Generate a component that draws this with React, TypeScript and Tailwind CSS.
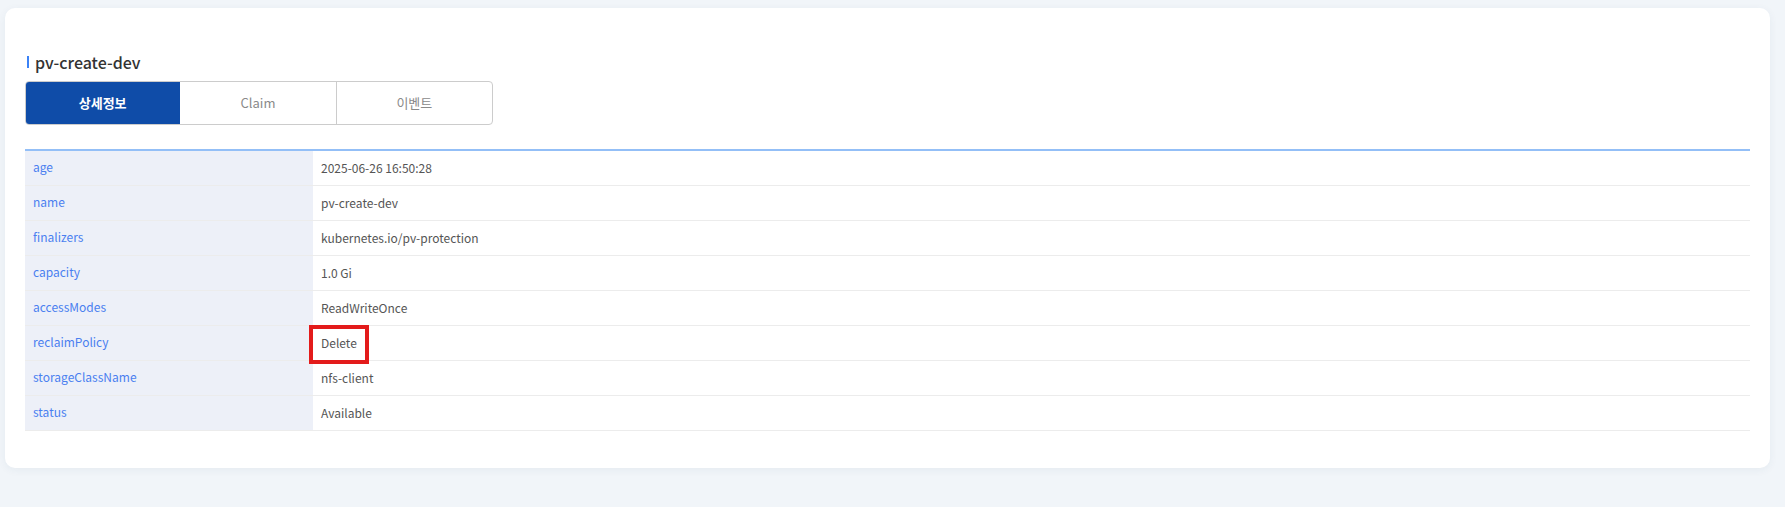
import React from "react";

const rows: [string, string][] = [
  ["age", "2025-06-26 16:50:28"],
  ["name", "pv-create-dev"],
  ["finalizers", "kubernetes.io/pv-protection"],
  ["capacity", "1.0 Gi"],
  ["accessModes", "ReadWriteOnce"],
  ["reclaimPolicy", "Delete"],
  ["storageClassName", "nfs-client"],
  ["status", "Available"],
];

export default function App() {
  return (
    <div
      className="w-[1785px] h-[507px] bg-[#f1f5f9] pl-[5px] pr-[15px] pt-[8px]"
      style={{ fontFamily: '"Noto Sans CJK KR", "Noto Sans", sans-serif' }}
    >
      <div className="bg-white rounded-[10px] shadow-[0_2px_8px_rgba(30,60,100,0.06)] px-[20px] pt-[42px] pb-[37px]">
        <div className="flex items-center h-[24px]">
          <span className="w-[2px] h-[12px] bg-[#3b82f6] ml-[2px] mr-[6px]" />
          <span className="text-[16px] font-medium text-[#333] leading-[24px]">pv-create-dev</span>
        </div>
        <div className="mt-[7px] flex w-[468px] h-[44px] rounded-[4px] border border-[#cccccc] overflow-hidden">
          <div className="flex-1 bg-[#0f4ca8] flex items-center justify-center text-white text-[13px] font-bold -m-px">
            상세정보
          </div>
          <div className="flex-1 flex items-center justify-center text-[#8a8a8a] text-[13px] border-r border-[#cccccc] ml-px">
            Claim
          </div>
          <div className="flex-1 flex items-center justify-center text-[#8a8a8a] text-[13px]">
            이벤트
          </div>
        </div>
        <div className="mt-[24px] border-t-2 border-[#93bff7]">
          {rows.map(([k, v]) => (
            <div key={k} className="flex h-[35px] border-b border-[#ececec] text-[12px]">
              <div className="w-[288px] bg-[#edf0f8] text-[#4a7ff0] pl-[8px] flex items-center pb-[3px]">
                {k}
              </div>
              <div className="relative flex-1 text-[#555] pl-[8px] flex items-center">
                {v}
                {k === "reclaimPolicy" && (
                  <div className="absolute left-[-4px] top-[-1px] w-[60px] h-[39px] border-[4px] border-[#e31b1b]" />
                )}
              </div>
            </div>
          ))}
        </div>
      </div>
    </div>
  );
}
